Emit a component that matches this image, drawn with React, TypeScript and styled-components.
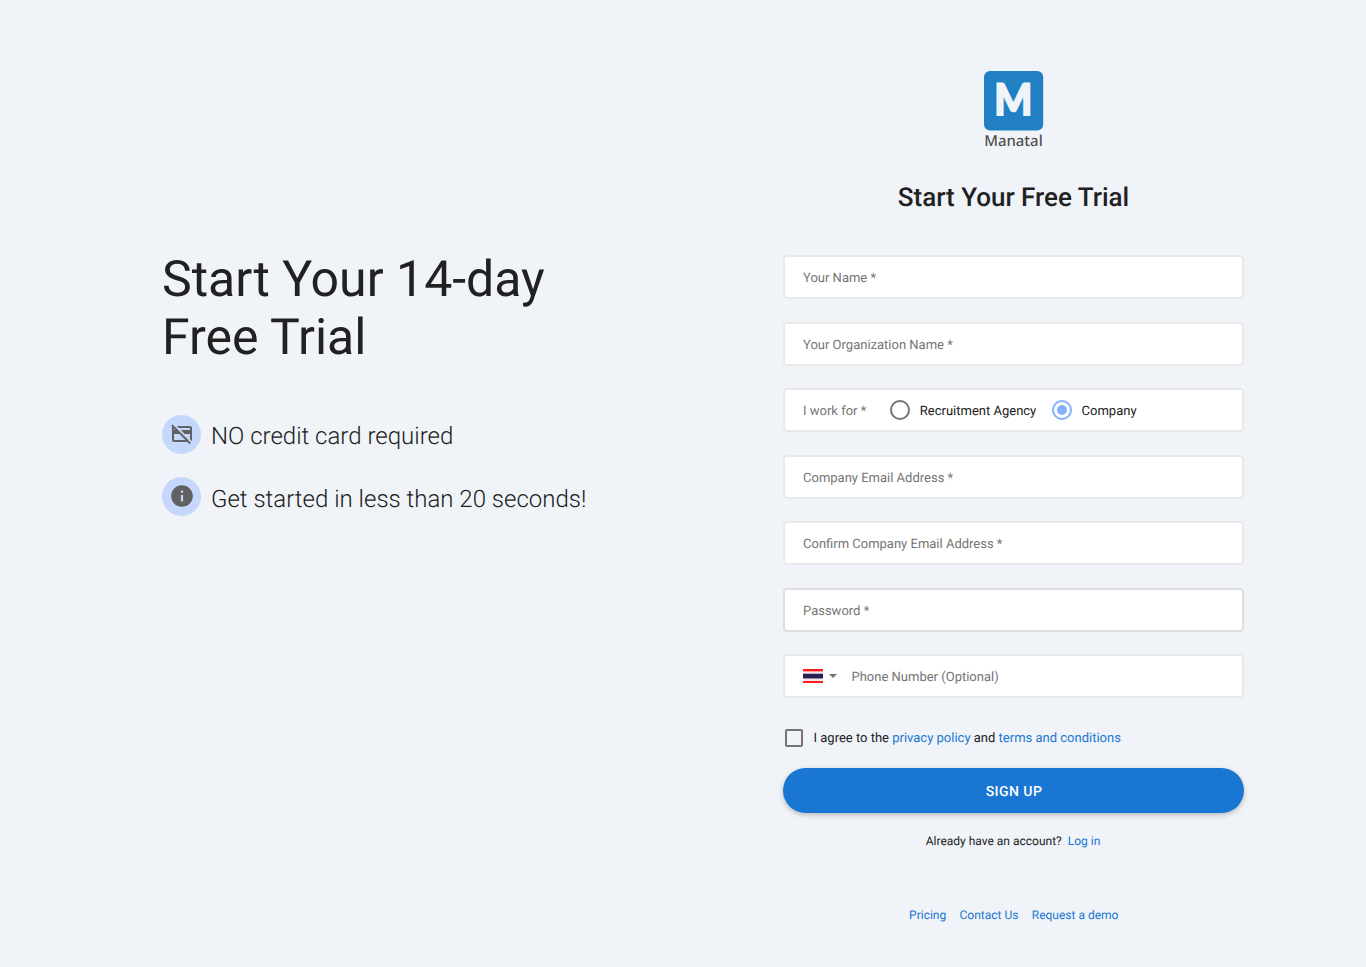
import React from "react";
import styled, { createGlobalStyle } from "styled-components";

const color = {
  BG: "#f0f4f9",
  TEXT: "#212121",
  GRAY: "#757575",
  ICON: "#616161",
  LINE: "#e9e9eb",
  LINE_ACTIVE: "#dedee0",
  PRIMARY: "#1976d2",
  ACCENT: "#82b1ff",
  BADGE: "#c5d8fb",
  LOGO: "#2180c3",
};

const Logo: React.FC = () => (
  <LogoSvg viewBox="0 0 64 80">
    <rect x="2" y="0" width="59.2" height="59.5" rx="6" fill={color.LOGO} />
    <text
      transform="translate(31.3 44.4) scale(0.92 1)"
      textAnchor="middle"
      fontFamily="Lato, sans-serif"
      fontWeight="900"
      fontSize="43.5"
      fill={color.BG}
      stroke={color.BG}
      strokeWidth="1.8"
    >
      M
    </text>
    <text
      x="2.2"
      y="75.4"
      textLength="58.5"
      lengthAdjust="spacingAndGlyphs"
      fontFamily="Noto Sans, sans-serif"
      fontWeight="500"
      fontSize="15"
      fill="#505050"
    >
      Manatal
    </text>
  </LogoSvg>
);

const NoCardIcon: React.FC = () => (
  <svg width="24" height="24" viewBox="0 0 24 24" fill={color.ICON}>
    <path d="M1.2 3.8 2.6 2.4 21 20.8l-1.4 1.4L17.4 20H4c-1.11 0-2-.89-2-2V6c0-.4.1-.75.3-1.05L1.2 3.8ZM4 12v6h11.4l-6-6H4ZM4 6.6V8h1.4L4 6.6ZM6.8 4H20c1.11 0 2 .89 2 2v12c0 .34-.08.66-.23.94L20 17.2V12h-5.2l-4-4H20V6H8.8l-2-2Z" />
  </svg>
);

const InfoIcon: React.FC = () => (
  <svg width="26" height="26" viewBox="0 0 24 24" fill={color.ICON}>
    <path d="M12 2C6.48 2 2 6.48 2 12s4.48 10 10 10 10-4.48 10-10S17.52 2 12 2zm1 15h-2v-6h2v6zm0-8h-2V7h2v2z" />
  </svg>
);

const Flag: React.FC = () => (
  <svg width="20" height="14" viewBox="0 0 20 14">
    <rect width="20" height="14" fill="#f8e4ea" />
    <rect width="20" height="2" fill="#ff1a1f" />
    <rect y="2" width="20" height="1" fill="#ff9da0" />
    <rect y="4" width="20" height="1" fill="#b5b0c6" />
    <rect y="5" width="20" height="4" fill="#272053" />
    <rect y="9" width="20" height="1" fill="#928dab" />
    <rect y="12" width="20" height="2" fill="#ff1a1f" />
  </svg>
);

const App: React.FC = () => {
  return (
    <>
      <GlobalStyle />
      <Page>
        <Intro>
          <Headline>
            Start Your 14-day
            <br />
            Free Trial
          </Headline>
          <Feature>
            <Badge>
              <NoCardIcon />
            </Badge>
            <span>NO credit card required</span>
          </Feature>
          <Feature>
            <Badge>
              <InfoIcon />
            </Badge>
            <span>Get started in less than 20 seconds!</span>
          </Feature>
        </Intro>
        <SignUp>
          <Logo />
          <Title>Start Your Free Trial</Title>
          <Fields>
            <Field>Your Name *</Field>
            <Field>Your Organization Name *</Field>
            <Field>
              I work for *
              <RadioGroup>
                <Option>
                  <Radio />
                  Recruitment Agency
                </Option>
                <Option>
                  <Radio $checked />
                  Company
                </Option>
              </RadioGroup>
            </Field>
            <Field>Company Email Address *</Field>
            <Field>Confirm Company Email Address *</Field>
            <Field $active>Password *</Field>
            <Field>
              <Flag />
              <Caret />
              Phone Number (Optional)
            </Field>
          </Fields>
          <Agreement>
            <Checkbox />
            <span>
              I agree to the <Link>privacy policy</Link> and <Link>terms and conditions</Link>
            </span>
          </Agreement>
          <Button>SIGN UP</Button>
          <Account>
            Already have an account?
            <Link>Log in</Link>
          </Account>
          <Footer>
            <Link>Pricing</Link>
            <Link>Contact Us</Link>
            <Link>Request a demo</Link>
          </Footer>
        </SignUp>
      </Page>
    </>
  );
};

export default App;

const GlobalStyle = createGlobalStyle`
  * {
    box-sizing: border-box;
  }
  body {
    margin: 0;
    background-color: ${color.BG};
    color: ${color.TEXT};
    font-family: Roboto, sans-serif;
    text-rendering: geometricPrecision;
  }
`;

const Page = styled.div`
  display: grid;
  grid-template-columns: 621px 461px;
  padding-left: 162px;
  height: 967px;
  overflow: hidden;
`;

const Intro = styled.div`
  padding-top: 251px;
`;

const Headline = styled.h1`
  margin: 0 0 48px;
  font-size: 50px;
  font-weight: 400;
  line-height: 58px;
`;

const Feature = styled.div`
  display: flex;
  height: 39px;
  margin-bottom: 23px;
  font-size: 24px;
  font-weight: 300;
  line-height: 43px;
  white-space: nowrap;
  & + & {
    line-height: 45px;
  }
`;

const Badge = styled.div`
  display: flex;
  align-items: center;
  justify-content: center;
  width: 39px;
  height: 39px;
  margin-right: 10px;
  padding-bottom: 1px;
  border-radius: 50%;
  background-color: ${color.BADGE};
`;

const SignUp = styled.div`
  display: flex;
  flex-direction: column;
  align-items: center;
  padding-top: 71px;
`;

const LogoSvg = styled.svg`
  width: 64px;
  height: 80px;
  flex-shrink: 0;
`;

const Title = styled.h2`
  margin: 31px 0 41px;
  font-size: 26px;
  font-weight: 500;
  line-height: 32px;
`;

const Fields = styled.div`
  display: flex;
  flex-direction: column;
  gap: 22.5px;
  width: 100%;
`;

const Field = styled.div<{ $active?: boolean }>`
  display: flex;
  align-items: center;
  height: 44px;
  padding: 4px 18px 0;
  border: 2px solid ${({ $active }) => ($active ? color.LINE_ACTIVE : color.LINE)};
  border-radius: 4px;
  background-color: #fff;
  color: ${color.GRAY};
  font-size: 13px;
  line-height: 14px;
  > svg {
    margin-top: -4px;
  }
`;

const RadioGroup = styled.div`
  display: flex;
  gap: 15.5px;
  margin-left: 23.7px;
`;

const Option = styled.div`
  display: flex;
  align-items: center;
  gap: 9.8px;
  color: ${color.TEXT};
`;

const Radio = styled.span<{ $checked?: boolean }>`
  width: 20px;
  height: 20px;
  margin-top: -4px;
  padding: 3px;
  border: 2px solid ${({ $checked }) => ($checked ? color.ACCENT : color.GRAY)};
  border-radius: 50%;
  &::before {
    content: "";
    display: block;
    width: 10px;
    height: 10px;
    border-radius: 50%;
    background-color: ${({ $checked }) => ($checked ? color.ACCENT : "transparent")};
  }
`;

const Caret = styled.span`
  margin: -4px 14.5px 0 6px;
  border: 4px solid transparent;
  border-top-color: ${color.GRAY};
  border-bottom: 0;
`;

const Link = styled.a`
  color: ${color.PRIMARY};
  cursor: pointer;
`;

const Agreement = styled.div`
  display: flex;
  align-items: center;
  width: 100%;
  height: 20px;
  margin-top: 30px;
  padding-left: 2px;
  font-size: 13px;
  line-height: 16px;
  > span:last-child {
    margin-top: 1px;
  }
`;

const Checkbox = styled.span`
  width: 18px;
  height: 18px;
  margin-right: 10.5px;
  border: 2px solid ${color.GRAY};
  border-radius: 2px;
`;

const Button = styled.button`
  width: 100%;
  height: 45px;
  margin-top: 20px;
  padding: 3px 0 0 1px;
  border: 0;
  border-radius: 23px;
  background-color: ${color.PRIMARY};
  color: #fff;
  font-family: inherit;
  font-size: 14px;
  font-weight: 500;
  letter-spacing: 0.45px;
  text-rendering: inherit;
  box-shadow: 0 2px 5px rgba(0, 0, 0, 0.24);
`;

const Account = styled.div`
  display: flex;
  gap: 6px;
  margin: 20px 1px 0 0;
  font-size: 12px;
  line-height: 16px;
`;

const Footer = styled.div`
  display: flex;
  gap: 13.3px;
  margin: 58px 0 0 0.5px;
  font-size: 12px;
  line-height: 16px;
`;
